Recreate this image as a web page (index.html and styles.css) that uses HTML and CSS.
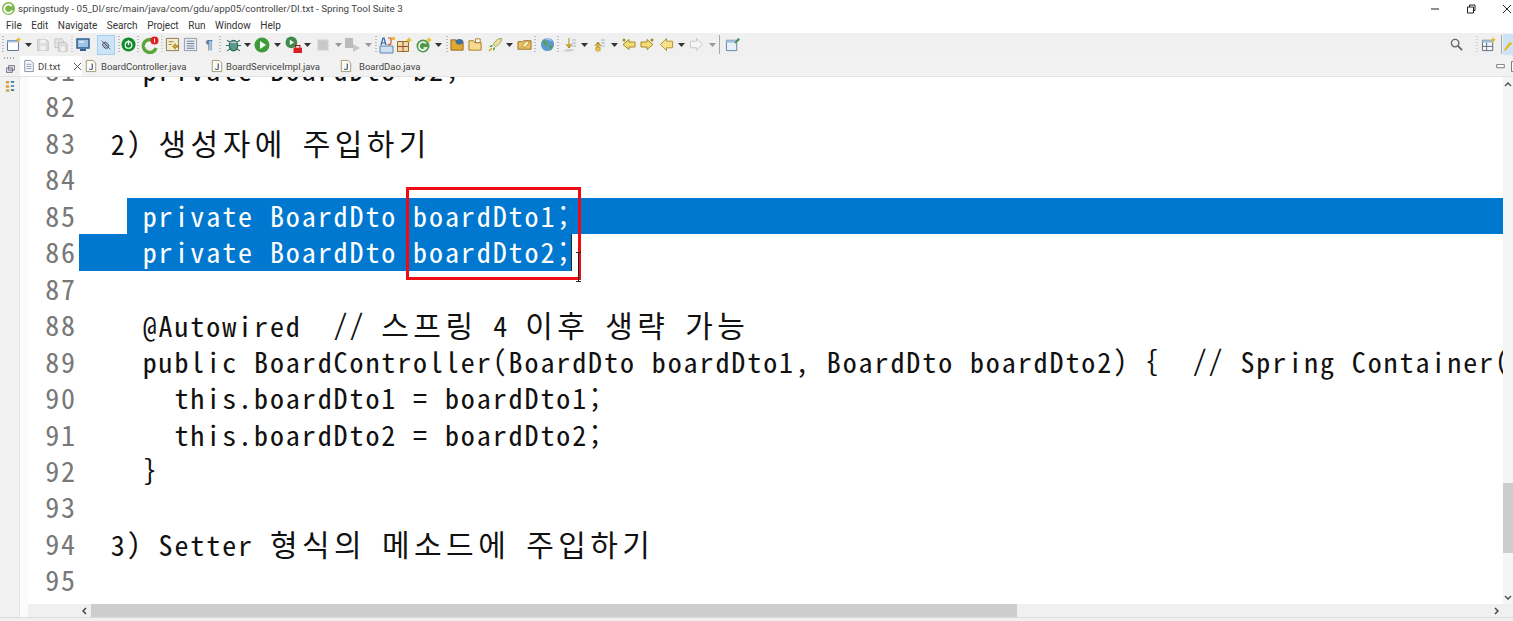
FILE: index.html
```
<!DOCTYPE html>
<html lang="ko">
<head>
<meta charset="utf-8">
<title>Spring Tool Suite 3</title>
<link rel="stylesheet" href="styles.css">
</head>
<body>
<svg class="defs" width="0" height="0">
  <symbol id="dd" viewBox="0 0 7 4"><path d="M0 0h7L3.5 4z" fill="#333"/></symbol>
  <symbol id="dg" viewBox="0 0 7 4"><path d="M0 0h7L3.5 4z" fill="#999"/></symbol>
  <symbol id="jf" viewBox="0 0 14 16"><path d="M1.5 1.5h8l3 3v10h-11z" fill="#fdfaf0" stroke="#9a8f6a"/><path d="M8.5 5v5.5c0 2-3 2-3.500 .5" fill="none" stroke="#3a5a9a" stroke-width="1.400"/></symbol>
</svg>
<div class="window">
  <header class="title">
    <svg class="logo" viewBox="0 0 14 14" width="13" height="13"><circle cx="7" cy="7" r="7" fill="#7ab648"/><path d="M10.500 4.500A4.500 4.500 0 1 0 11 9" fill="none" stroke="#fff" stroke-width="2"/></svg>
    <span class="title-text">springstudy - 05_DI/src/main/java/com/gdu/app05/controller/DI.txt - Spring Tool Suite 3</span>
    <div class="winctl">
      <svg viewBox="0 0 10 10" width="10" height="10"><path d="M1 5h8" stroke="#222" stroke-width="1"/></svg>
      <svg viewBox="0 0 10 10" width="10" height="10"><path d="M1.500 3h6v6h-6zM3.500 3V1h5.500v5.500H7.500" fill="none" stroke="#222"/></svg>
      <svg viewBox="0 0 10 10" width="10" height="10"><path d="M1 1l8 8M9 1l-8 8" stroke="#222"/></svg>
    </div>
  </header>
  <nav class="menu">
    <span>File</span><span>Edit</span><span>Navigate</span><span>Search</span><span>Project</span><span>Run</span><span>Window</span><span>Help</span>
  </nav>
  <div class="toolbar">
    <div class="tools">
      <i class="sep"></i>
      <i class="s"><svg viewBox="0 0 16 16" width="16" height="16"><path d="M1.500 3.500h11v10h-11z" fill="#fff" stroke="#5a7a9a"/><path d="M1.500 3.500h11v2h-11z" fill="#a9c4dc"/><path d="M12.500 0l1 2 2 .5-2 1-1 2-1-2-2-1 2-.5z" fill="#e8b820"/></svg></i>
      <i class="s"><svg class="ar"><use href="#dd"/></svg></i>
      <i class="s"><svg viewBox="0 0 16 16" width="14" height="14"><path d="M2 2h10l2 2v10H2z" fill="#ddd" stroke="#bbb"/><path d="M5 2h6v4H5zM5 9h6v5H5z" fill="#f2f2f2"/></svg></i>
      <i class="s"><svg viewBox="0 0 16 16" width="14" height="14"><path d="M1 1h8l2 2v8H1z" fill="#e4e4e4" stroke="#c4c4c4"/><path d="M5 5h8l2 2v8H5z" fill="#ddd" stroke="#bbb"/><path d="M7.500 10h5v5h-5z" fill="#f2f2f2"/></svg></i>
      <i class="sep dim"></i>
      <i class="s"><svg viewBox="0 0 16 16" width="16" height="16"><path d="M2 2h12v9H2z" fill="#9fc4e4" stroke="#2f5f8f" stroke-width="1.500"/><path d="M5 13h6" stroke="#2f5f8f" stroke-width="2"/><path d="M4 5h5" stroke="#fff"/></svg></i>
      <i class="s"><b class="toggle"><svg viewBox="0 0 16 16" width="14" height="14"><ellipse cx="8" cy="8.500" rx="4" ry="3" fill="#9fb4c8" stroke="#556" transform="rotate(45 8 8)"/><path d="M3 3l10 10" stroke="#556"/></svg></b></i>
      <i class="sep"></i>
      <i class="s"><svg viewBox="0 0 16 16" width="15" height="15"><circle cx="8" cy="8" r="7.500" fill="#0f8a2c"/><circle cx="8" cy="8.500" r="3.500" fill="none" stroke="#fff" stroke-width="1.300"/><path d="M8 3.500v5" stroke="#fff" stroke-width="1.500"/></svg></i>
      <i class="sep"></i>
      <i class="s"><svg viewBox="0 0 18 18" width="18" height="18"><path d="M14 6A6.500 6.500 0 1 0 15 12" fill="none" stroke="#5aa63a" stroke-width="3.500"/><path d="M4 11a5 5 0 0 1 5-4" stroke="#fff" fill="none"/><circle cx="13.500" cy="4.500" r="4" fill="#e02020"/><path d="M13.500 2.500v4" stroke="#fff"/></svg></i>
      <i class="sep dim"></i>
      <i class="s"><svg viewBox="0 0 16 16" width="15" height="15"><path d="M1.500 1.500h13v13h-13z" fill="#f4ecc8" stroke="#8a7a50"/><path d="M4 5h5M4 8h3" stroke="#8a7a50"/><path d="M8 10l3-3v2h3v2h-3v2z" fill="#d8a020" stroke="#806010" stroke-width=".5"/></svg></i>
      <i class="s"><svg viewBox="0 0 16 16" width="15" height="15"><path d="M1.500 1.500h13v13h-13z" fill="#e6ecf2" stroke="#8a9aa8"/><path d="M4 4.500h8M4 7h8M4 9.500h8M4 12h8" stroke="#6a7a88"/></svg></i>
      <i class="s para">¶</i>
      <i class="sep"></i>
      <i class="s"><svg viewBox="0 0 16 16" width="17" height="17"><ellipse cx="8" cy="9" rx="4" ry="5" fill="#5b9a8a" stroke="#2a6a5a"/><path d="M2 4l3 2M14 4l-3 2M1 9h3M15 9h-3M2 14l3-2M14 14l-3-2" stroke="#2a6a5a"/><path d="M5 6h6" stroke="#dce"/></svg></i>
      <i class="s"><svg class="ar"><use href="#dd"/></svg></i>
      <i class="s"><svg viewBox="0 0 16 16" width="16" height="16"><circle cx="8" cy="8" r="7.500" fill="#3f9a3a"/><path d="M6 4l6 4-6 4z" fill="#fff"/></svg></i>
      <i class="s"><svg class="ar"><use href="#dd"/></svg></i>
      <i class="s"><svg viewBox="0 0 16 16" width="17" height="17"><circle cx="6" cy="6" r="5.500" fill="#3f8a4a"/><path d="M4.500 3.500l4 2.500-4 2.500z" fill="#fff"/><path d="M8 11h8v5H8z" fill="#d92020"/><path d="M10 11V9h4v2" fill="none" stroke="#a01010"/></svg></i>
      <i class="s"><svg class="ar"><use href="#dd"/></svg></i>
      <i class="s"><svg viewBox="0 0 16 16" width="14" height="14"><path d="M2 2h12v12H2z" fill="#c8c8c8" stroke="#ddd"/></svg></i>
      <i class="s"><svg class="ar"><use href="#dg"/></svg></i>
      <i class="s"><svg viewBox="0 0 18 18" width="18" height="18"><path d="M1 2h8v10H1z" fill="#bbb"/><path d="M9 8l7 4-7 4z" fill="#c8c8c8"/></svg></i>
      <i class="s"><svg class="ar"><use href="#dg"/></svg></i>
      <i class="sep"></i>
      <i class="s"><svg viewBox="0 0 18 18" width="18" height="18"><path d="M2 10h13v7H2z" fill="#cfe0f0" stroke="#5a86b0"/><path d="M3 9L5 2h1l2 7M4 7h3" fill="none" stroke="#2a62b0" stroke-width="1.200"/><path d="M10 2h3v5c0 2-2 2-3 1" fill="none" stroke="#d05a20" stroke-width="1.200"/><path d="M14 1h3v3h-3z" fill="#e8c030"/></svg></i>
      <i class="s"><svg viewBox="0 0 16 16" width="16" height="16"><path d="M1.500 4.500h11v10h-11z" fill="#eed9a8" stroke="#9a6a2a"/><path d="M7 4.500v10M1.500 9.500h11" stroke="#9a4a2a"/><path d="M13 0l1 2 2 1-2 1-1 2-1-2-2-1 2-1z" fill="#e8b820"/></svg></i>
      <i class="s"><svg viewBox="0 0 16 16" width="16" height="16"><circle cx="7" cy="9" r="6.500" fill="#4f9a4a"/><path d="M10 6.500A4 4 0 1 0 10.500 11H7.500" fill="none" stroke="#fff" stroke-width="1.500"/><path d="M13 0l1 2 2 1-2 1-1 2-1-2-2-1 2-1z" fill="#e8b820"/></svg></i>
      <i class="s"><svg class="ar"><use href="#dd"/></svg></i>
      <i class="sep"></i>
      <i class="s"><svg viewBox="0 0 16 16" width="15" height="15"><path d="M1 3h5l1 2h7v9H1z" fill="#e0a830" stroke="#9a6a1a"/><ellipse cx="10" cy="5" rx="4" ry="3" fill="#3f6f9f"/></svg></i>
      <i class="s"><svg viewBox="0 0 16 16" width="15" height="15"><path d="M1 4h5l1 2h7v8H1z" fill="#f6dc90" stroke="#a87a20"/><path d="M8 2h5v4H8z" fill="#fff" stroke="#a87a20"/></svg></i>
      <i class="s"><svg viewBox="0 0 16 16" width="16" height="16"><path d="M14.500 1.500c-4 0-7 3-8 6l2 2c3-1 6-4 6-8z" fill="#e8e0a0" stroke="#a8a050"/><path d="M6 8l-2 0-2 2 3 0zM8 10v2l-2 2 0-3z" fill="#6aa84a"/><path d="M2 14l3-3" stroke="#d8a020" stroke-width="1.500"/></svg></i>
      <i class="s"><svg class="ar"><use href="#dd"/></svg></i>
      <i class="s"><svg viewBox="0 0 16 16" width="15" height="15"><path d="M1 5h5l1-1h8v9H1z" fill="#e6c060" stroke="#9a7020"/><path d="M5 10l5-6 3 2-4 5z" fill="#f6eab0" stroke="#9a7020" stroke-width=".6"/></svg></i>
      <i class="sep"></i>
      <i class="s"><svg viewBox="0 0 16 16" width="15" height="15"><circle cx="8" cy="8" r="7" fill="#5a9ad0"/><path d="M3 4c3-1 4 1 5 3s-2 3-3 1-3-2-2-4zM10 9c2-1 4 0 3 2s-2 3-3 1z" fill="#5aa04a"/><path d="M6 2a7 7 0 0 1 6 2" stroke="#eef" fill="none"/></svg></i>
      <i class="sep"></i>
      <i class="s"><svg viewBox="0 0 16 16" width="16" height="16"><path d="M8 1v9M5 7l3 4 3-4" fill="#eec850" stroke="#a88a20"/><path d="M5 13h8M11 3h4M11 6h4M11 9h4" stroke="#a8b4c0"/><path d="M3 14h7" stroke="#c0c8d0"/></svg></i>
      <i class="s"><svg class="ar"><use href="#dd"/></svg></i>
      <i class="s"><svg viewBox="0 0 16 16" width="16" height="16"><path d="M8 15V6M5 9l3-4 3 4" fill="#eec850" stroke="#a88a20"/><path d="M11 3h4M11 6h4M11 9h4" stroke="#a8b4c0"/><path d="M6 14V10h4v4" fill="#eec850" stroke="#a88a20" stroke-width=".8"/></svg></i>
      <i class="s"><svg class="ar"><use href="#dd"/></svg></i>
      <i class="s"><svg viewBox="0 0 16 16" width="16" height="16"><path d="M7 4V1.500L1 6.500l6 5V9h6V4z" transform="translate(1 1)" fill="#f4dc78" stroke="#a88a20"/><circle cx="3" cy="3" r="1.500" fill="#a88a20"/></svg></i>
      <i class="s"><svg viewBox="0 0 16 16" width="16" height="16"><path d="M9 4V1.500l6 5-6 5V9H3V4z" transform="translate(-1 1)" fill="#f4dc78" stroke="#a88a20"/><circle cx="13" cy="3" r="1.500" fill="#a88a20"/></svg></i>
      <i class="s"><svg viewBox="0 0 16 16" width="15" height="15"><path d="M8 4.500V1.500L1.500 8l6.500 6.500v-3h6.500v-7z" fill="#f6e08a" stroke="#b09030"/></svg></i>
      <i class="s"><svg class="ar"><use href="#dd"/></svg></i>
      <i class="s"><svg viewBox="0 0 16 16" width="15" height="15"><path d="M8 4.500V1.500L14.500 8 8 14.500v-3H1.500v-7z" fill="#f4f4f4" stroke="#c8c8c8"/></svg></i>
      <i class="s"><svg class="ar"><use href="#dg"/></svg></i>
      <i class="vsep"></i>
      <i class="s"><svg viewBox="0 0 16 16" width="15" height="15"><path d="M1.500 3.500h11v11h-11z" fill="#e8f0f8" stroke="#5a82a8"/><path d="M1.500 3.500h11v2.500h-11z" fill="#a4c0dc"/><path d="M10 6l4-5 2 2-5 4z" fill="#3f8a4a"/></svg></i>
    </div>
    <div class="tools-right">
      <svg viewBox="0 0 14 14" width="13" height="13"><circle cx="5.500" cy="5.500" r="4" fill="none" stroke="#666" stroke-width="1.500"/><path d="M8.500 8.500l4.500 4.500" stroke="#666" stroke-width="2"/></svg>
      <i class="sep dim"></i>
      <svg viewBox="0 0 16 16" width="15" height="15"><path d="M1.500 3.500h11v11h-11z" fill="#f4f6f8" stroke="#5a6a7a"/><path d="M1.500 3.500h11v2.500h-11z" fill="#a4c0dc"/><path d="M6 6v8.500M1.500 10h11" stroke="#5a6a7a"/><path d="M13 0l1 2 2 1-2 1-1 2-1-2-2-1 2-1z" fill="#e8b820"/></svg>
      <i class="vsep"></i>
      <b class="persp"><svg viewBox="0 0 12 16" width="10" height="16"><path d="M1 14L8 4l3 2-8 9z" fill="#e8b820"/></svg></b>
    </div>
  </div>
  <div class="tabrow">
    <div class="rail-top">
      <i class="grip"></i>
      <svg viewBox="0 0 12 10" width="9" height="8"><path d="M3.500 .5h8v6h-8zM.5 3.500h8v6h-8z" fill="#dde" stroke="#556"/></svg>
    </div>
    <div class="tab active">
      <svg viewBox="0 0 14 16" width="12" height="14"><path d="M2 1.500h7l3 3v10H2z" fill="#f4f6fa" stroke="#7a8aa0"/><path d="M4 6h6M4 8.500h6M4 11h6" stroke="#8a9ab0"/></svg>
      <span>DI.txt</span>
      <svg class="close" viewBox="0 0 10 10" width="9" height="9"><path d="M1 1l8 8M9 1l-8 8" stroke="#444"/></svg>
    </div>
    <div class="tab t1"><svg width="12" height="14"><use href="#jf"/></svg><span>BoardController.java</span></div>
    <div class="tab t2"><svg width="12" height="14"><use href="#jf"/></svg><span>BoardServiceImpl.java</span></div>
    <div class="tab t3"><svg width="12" height="14"><use href="#jf"/></svg><span>BoardDao.java</span></div>
    <div class="tabctl">
      <svg viewBox="0 0 10 6" width="9" height="5"><path d="M.5 .5h9v4h-9z" fill="#fff" stroke="#666"/></svg>
      <svg viewBox="0 0 10 12" width="9" height="11"><path d="M.5 .5h9v11h-9z" fill="#fff" stroke="#666"/></svg>
    </div>
  </div>
  <main class="main">
    <aside class="rail">
      <svg viewBox="0 0 12 14" width="10" height="12"><path d="M1 1h4v3H1zM1 6h4v3H1zM1 11h4v3H1z" fill="#d8a040"/><path d="M7 2h4M7 7h4M7 12h4" stroke="#3a7a9a" stroke-width="2"/></svg>
    </aside>
    <div class="ruler"></div>
    <section class="pane">
      <div class="viewport">
        <div class="editor">
          <div class="code">
            <div class="line"><span class="num">81</span><span class="txt">    private BoardDto b2;</span></div>
            <div class="line"><span class="num">82</span></div>
            <div class="line"><span class="num">83</span><span class="txt">  2) <span class="ko">생성자에</span> <span class="ko">주입하기</span></span></div>
            <div class="line"><span class="num">84</span></div>
            <div class="line"><span class="num">85</span><span class="txt">   </span><span class="txt sel fill"> private BoardDto boardDto1;</span></div>
            <div class="line"><span class="num">86</span><span class="txt sel caret">    private BoardDto boardDto2;</span></div>
            <div class="line"><span class="num">87</span></div>
            <div class="line"><span class="num">88</span><span class="txt">    @Autowired  // <span class="ko">스프링</span> 4 <span class="ko">이후</span> <span class="ko">생략</span> <span class="ko">가능</span></span></div>
            <div class="line"><span class="num">89</span><span class="txt">    public BoardController(BoardDto boardDto1, BoardDto boardDto2) {  // Spring Container(</span></div>
            <div class="line"><span class="num">90</span><span class="txt">      this.boardDto1 = boardDto1;</span></div>
            <div class="line"><span class="num">91</span><span class="txt">      this.boardDto2 = boardDto2;</span></div>
            <div class="line"><span class="num">92</span><span class="txt">    }</span></div>
            <div class="line"><span class="num">93</span></div>
            <div class="line"><span class="num">94</span><span class="txt">  3) Setter <span class="ko">형식의</span> <span class="ko">메소드에</span> <span class="ko">주입하기</span></span></div>
            <div class="line"><span class="num">95</span></div>
          </div>
          <div class="redbox"></div>
          <svg class="ibeam" viewBox="0 0 7 30" width="7" height="30"><path d="M1 .5h5M3.500 .5v29M1 29.500h5" stroke="#222" fill="none"/></svg>
        </div>
        <div class="vscroll">
          <svg viewBox="0 0 8 5" width="8" height="5"><path d="M1 4l3-3 3 3" fill="none" stroke="#555" stroke-width="1.500"/></svg>
          <div class="vtrack"><div class="vthumb"></div></div>
          <svg viewBox="0 0 8 5" width="8" height="5"><path d="M1 1l3 3 3-3" fill="none" stroke="#555" stroke-width="1.500"/></svg>
        </div>
      </div>
      <div class="hscroll">
        <svg viewBox="0 0 5 8" width="5" height="8"><path d="M4 1L1 4l3 3" fill="none" stroke="#444" stroke-width="1.500"/></svg>
        <div class="htrack"><div class="hthumb"></div></div>
        <svg viewBox="0 0 5 8" width="5" height="8"><path d="M1 1l3 3-3 3" fill="none" stroke="#444" stroke-width="1.500"/></svg>
      </div>
    </section>
  </main>
  <footer class="status"></footer>
</div>
</body>
</html>
```
FILE: styles.css
```
* { box-sizing: border-box; }
html, body { margin: 0; height: 100%; overflow: hidden; background: #fff; }
body { font-family: Roboto, "Noto Sans", "Noto Sans CJK KR", sans-serif; color: #222; }
.defs { position: absolute; }
i, b { font-style: normal; font-weight: normal; }
svg { display: block; flex: none; }

.window { display: flex; flex-direction: column; height: 621px; width: 1513px; overflow: hidden; }

.title { flex: 0 0 17px; display: flex; align-items: center; padding-left: 2px; gap: 3px; background: #fff; }
.title-text { font-size: 9.8px; color: #444; white-space: pre; }
.winctl { margin-left: auto; display: flex; gap: 26px; padding-right: 1px; }

.menu { flex: 0 0 16px; display: flex; align-items: center; padding-left: 6px; gap: 9.6px; font-size: 10px; color: #333; background: #fff; }

.toolbar { flex: 0 0 23px; display: flex; justify-content: space-between; align-items: center; background: #f0f0f0; }
.tools {
  display: grid;
  align-items: center;
  padding-left: 3px;
  grid-template-columns: 11px 14px 15px 18px 11px 11px 23px 13px 9px 10px 12px 12px 10px 18px 19px 11px 13px 14px 15px 15px 16px 14px 16px 15px 15px 15px 8px 11px 17px 20px 14px 9px 10px 18px 20px 14px 15px 11px 12px 11px 11px 15px 14px 16px 15px 18px 19px 15px 15px 16px 7px 13px 16px;
}
.tools > i { width: 0; display: flex; justify-content: center; align-items: center; height: 23px; }
.s { overflow: visible; }
.ar { width: 7px; height: 4px; }
.sep::before { content: ""; display: block; flex: none; width: 2px; height: 17px; background: repeating-linear-gradient(#bbb 0 1px, transparent 1px 3px); }
.sep.dim::before { opacity: .6; }
.tools > .vsep::before, .tools-right .vsep::before { content: ""; display: block; flex: none; width: 1px; height: 19px; background: #a8a8a8; }
.toggle { flex: none; width: 18px; height: 20px; display: flex; align-items: center; justify-content: center; background: #cce4f7; border: 1px solid #a6cdec; }
.para { font-size: 13px; color: #5a7fa8; font-family: "Liberation Sans", sans-serif; font-weight: bold; }
.tools-right { display: flex; align-items: center; height: 23px; }
.tools-right > svg:first-child { margin-right: 13px; }
.tools-right .sep { width: 2px; display: flex; margin-right: 3px; }
.tools-right .sep + svg { margin-right: 5px; }
.tools-right .vsep { width: 1px; margin-right: 1px; display: flex; }
.persp { width: 10px; height: 21px; display: flex; align-items: center; background: #cce4f7; }

.tabrow { flex: 0 0 21px; display: flex; align-items: flex-end; background: #f2f2f2; border-bottom: 1px solid #e2e2e2; }
.rail-top { width: 20px; height: 20px; flex: none; display: flex; flex-direction: column; align-items: center; gap: 6px; padding-top: 1px; }
.grip { display: block; width: 12px; height: 2px; background: repeating-linear-gradient(90deg, #aaa 0 1px, transparent 1px 3px); }
.tab { display: flex; align-items: center; height: 20px; font-size: 9.5px; color: #444; white-space: pre; }
.tab.active { width: 62px; padding-left: 3px; gap: 3px; background: #fff; }
.close { margin-left: 10px; }
.t1 { width: 126px; gap: 4px; padding-left: 3px; }
.t2 { width: 129px; gap: 3px; padding-left: 3px; }
.t3 { gap: 7px; padding-left: 3px; }
.tabctl { margin-left: auto; display: flex; align-items: center; gap: 6px; height: 20px; margin-right: -7px; }

.main { flex: 1; min-height: 0; display: flex; }
.rail { flex: 0 0 20px; display: flex; flex-direction: column; align-items: center; padding-top: 3px; background: #f2f2f2; border-right: 1px solid #e4e4e4; }
.ruler { flex: 0 0 8px; background: #fbfbfb; }
.pane { flex: 1; min-width: 0; display: flex; flex-direction: column; }
.viewport { flex: 1; min-height: 0; display: flex; }
.editor { flex: 1; min-width: 0; position: relative; overflow: hidden; background: #fff; }
.code { margin-top: -25px; font-family: "Noto Sans CJK KR", "Noto Sans", sans-serif; font-size: 28px; font-feature-settings: "hwid" 1; }
.line { display: flex; height: 36.46px; line-height: 34.5px; white-space: pre; }
.num { flex: 0 0 49px; text-align: right; color: #787878; letter-spacing: 1.91px; }
.txt { margin-left: 2px; color: #111; letter-spacing: 1.91px; }
.txt + .txt { margin-left: 0; }
.ko { font-size: 30px; letter-spacing: 4.45px; }
.sel { background: #0078d0; color: #fff; }
.fill { flex: 1; }
.caret { box-shadow: inset -1px 0 0 #1a2a3a; }
.redbox { position: absolute; left: 378px; top: 110px; width: 175px; height: 93px; border: 3px solid #ee0b14; }
.ibeam { position: absolute; left: 547px; top: 175px; }

.vscroll { flex: 0 0 10px; display: flex; flex-direction: column; align-items: center; padding: 5px 0 4px; background: #f5f5f5; }
.vtrack { flex: 1; width: 10px; position: relative; }
.vthumb { position: absolute; left: 0; top: 396px; width: 10px; height: 70px; background: #cdcdcd; }

.hscroll { flex: 0 0 13px; display: flex; align-items: center; padding: 0 14px 0 54px; gap: 4px; background: #f0f0f0; }
.htrack { flex: 1; height: 13px; }
.hthumb { height: 13px; width: 926px; background: #cdcdcd; }

.status { flex: 0 0 4px; background: #f0f0f0; border-top: 1px solid #dcdcdc; }
```
